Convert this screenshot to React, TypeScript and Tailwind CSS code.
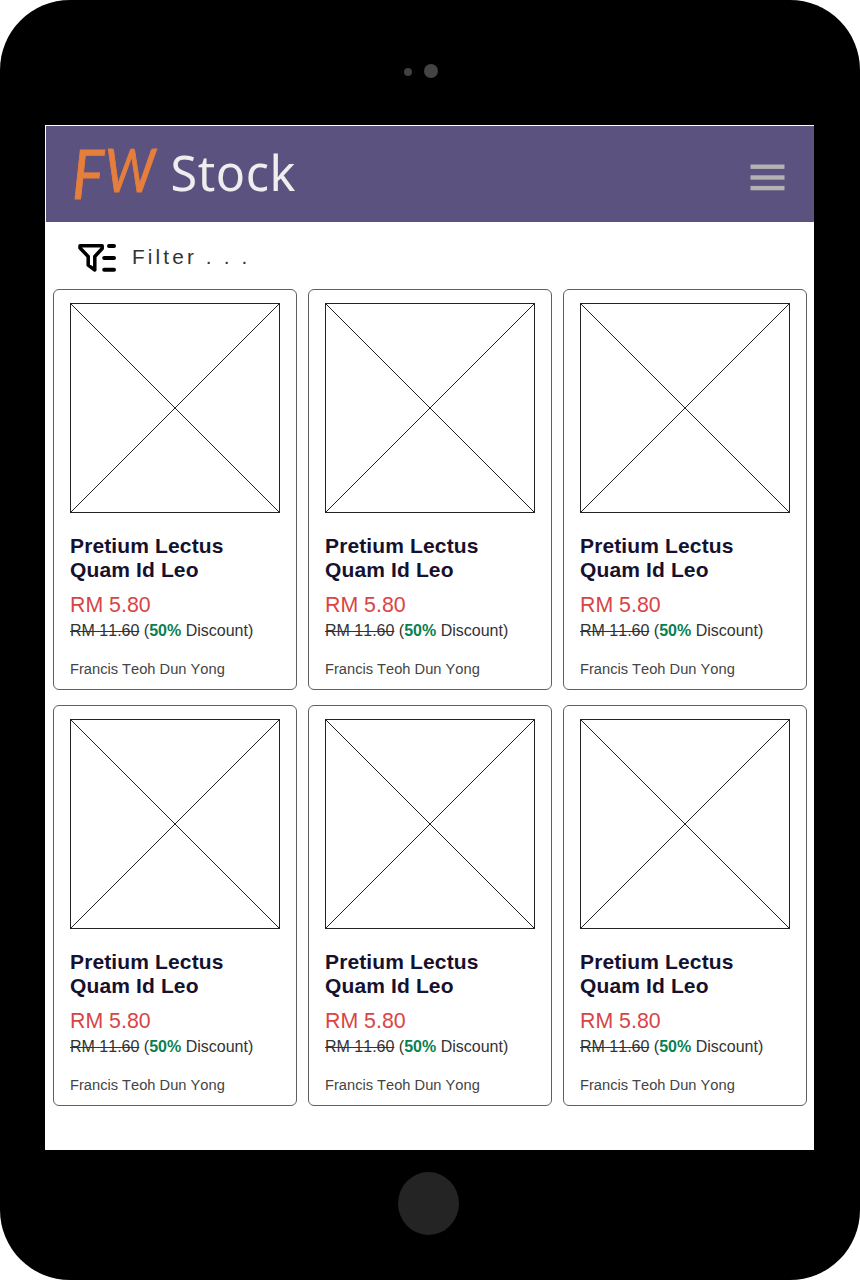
const products = Array.from({ length: 6 }, (_, id) => ({
  id,
  title: ['Pretium Lectus', 'Quam Id Leo'],
  price: 'RM 5.80',
  original: 'RM 11.60',
  discount: '50%',
  author: 'Francis Teoh Dun Yong',
}));

type Product = (typeof products)[number];

function ProductCard({ product }: { product: Product }) {
  return (
    <article className="h-[401px] w-[244px] rounded-[6px] border border-[#606060] bg-white pt-[13px] pl-4">
      <svg className="block h-[210px] w-[210px]" viewBox="0 0 210 210" fill="none" stroke="#222">
        <rect x="0.5" y="0.5" width="209" height="209" />
        <path d="M0.5 0.5L209.5 209.5M209.5 0.5L0.5 209.5" />
      </svg>
      <h2 className="mt-[21px] text-[21px] leading-6 font-bold tracking-[0.13px] text-[#15112e]">
        {product.title[0]}
        <br />
        {product.title[1]}
      </h2>
      <p className="mt-[11px] text-[21.33px] leading-6 text-[#d84444]">{product.price}</p>
      <p className="mt-[5px] text-base leading-[18px] whitespace-nowrap text-[#333] [font-kerning:none]">
        <s>{product.original}</s> (<b className="text-[#0a8050]">{product.discount}</b> Discount)
      </p>
      <p className="mt-[21px] text-[14.67px] leading-4 text-[#444] [font-kerning:none]">{product.author}</p>
    </article>
  );
}

function Header() {
  return (
    <header className="flex h-[97px] items-start justify-between border-t border-l border-white bg-[#5c527f] bg-clip-padding">
      <svg className="ml-[4px] h-[96px] w-[270px] overflow-visible" viewBox="50 126 270 96" role="img">
        <g fill="#e67e3c" stroke="#e67e3c" strokeWidth="0.9" fontFamily="'Lato', sans-serif" fontStyle="italic">
          <text x="72" y="198.5" fontSize="67" textLength="32" lengthAdjust="spacingAndGlyphs">F</text>
          <text x="105" y="191.5" fontSize="61" textLength="50" lengthAdjust="spacingAndGlyphs">W</text>
        </g>
        <text x="170.5" y="191" fontSize="48.5" fill="#eeeeef" textLength="125" fontFamily="'Noto Sans', sans-serif">Stock</text>
      </svg>
      <button aria-label="Menu" className="mt-[38px] mr-[29px] block">
        <svg className="block h-[27px] w-[35px]" viewBox="0 0 35 27" fill="#b3b3b3">
          <rect x="0.5" y="0.5" width="34" height="4.4" />
          <rect x="0.5" y="11.3" width="34" height="4.4" />
          <rect x="0.5" y="21.9" width="34" height="4.4" />
        </svg>
      </button>
    </header>
  );
}

export default function App() {
  return (
    <div className="h-[1280px] w-[860px] bg-white font-['Liberation_Sans',Arial,sans-serif]">
      <div className="flex h-full flex-col rounded-[70px] bg-black">
        <div className="flex h-[125px] shrink-0 items-start pt-[63.5px] pl-[404px]">
          <span className="mt-[4.5px] h-2 w-2 rounded-full bg-[#404040]" />
          <span className="ml-[12px] h-[14px] w-[14px] rounded-full bg-[#444]" />
        </div>
        <main className="ml-[45px] h-[1025px] w-[769px] shrink-0 bg-white">
          <Header />
          <div className="flex h-[67px] items-start pl-[33px]">
            <svg className="mt-[20px] h-[32px] w-[40px]" viewBox="78 242 40 32" fill="none" stroke="#000" strokeWidth="4" strokeLinecap="round" strokeLinejoin="round">
              <path strokeWidth="3.5" d="M80 245.7H102.2V248.5L94.8 256.5V270L88.2 265.2V256.5L80 248Z" />
              <path d="M109 246H114M104.2 258H114M104.2 269.8H114" />
            </svg>
            <span className="mt-[23px] ml-[14px] text-[20.8px] leading-6 tracking-[3.12px] text-[#333]">Filter . . .</span>
          </div>
          <section className="ml-2 grid grid-cols-[repeat(3,244px)] gap-x-[11px] gap-y-[15px]">
            {products.map((product) => (
              <ProductCard key={product.id} product={product} />
            ))}
          </section>
        </main>
        <div className="flex shrink-0 justify-center pt-[22px] pr-[3px]">
          <span className="h-[63px] w-[61px] rounded-[50%] bg-[#242424]" />
        </div>
      </div>
    </div>
  );
}
